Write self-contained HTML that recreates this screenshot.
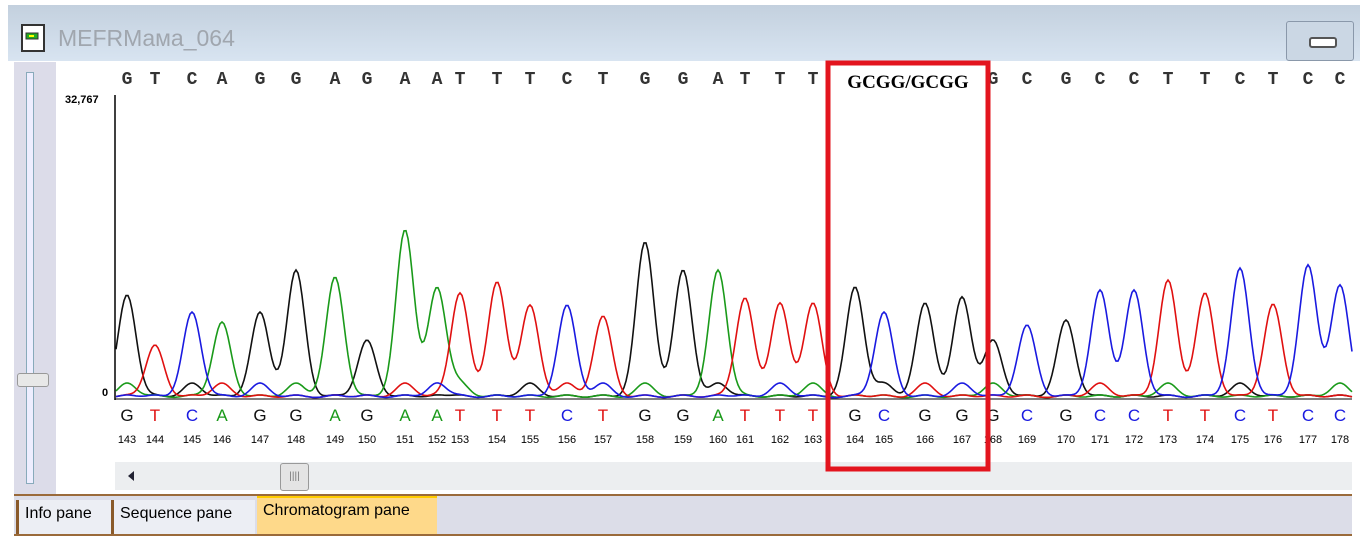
<!DOCTYPE html>
<html><head><meta charset="utf-8"><style>
body{margin:0;width:1360px;height:543px;background:#fff;position:relative;overflow:hidden;font-family:"Liberation Sans",sans-serif}
.title{position:absolute;left:8px;top:5px;width:1352px;height:56px;background:linear-gradient(#c3d0de,#d8e4f1);}
.ttext{position:absolute;left:50px;top:20px;font-size:23px;color:#a0a6ae}
.left{position:absolute;left:14px;top:62px;width:42px;height:432px;background:#dcdce9}
.main{position:absolute;left:56px;top:62px;width:1296px;height:432px;background:#fff}
.tabs{position:absolute;left:14px;top:494px;width:1338px;height:42px;background:#dcdde8;border-top:2px solid #9a6a3a;border-bottom:2px solid #9a6a3a;box-sizing:border-box}
.tab{position:absolute;top:4px;height:34px;font-size:16px;padding:5px 6px;box-sizing:border-box;background:#eceef4;border-left:3px solid #8a5a2a}
</style></head><body>
<div class="title">
 <svg style="position:absolute;left:12px;top:18px" width="28" height="30"><rect x="2" y="2" width="22" height="26" fill="#fff" stroke="#333" stroke-width="2"/><rect x="6" y="10" width="12" height="6" fill="#2a2" stroke="#333"/><rect x="9" y="12" width="5" height="2" fill="#ff0"/></svg>
 <div class="ttext">MEFRMама_064</div>
 <div style="position:absolute;left:1278px;top:16px;width:66px;height:38px;border:1px solid #8a98aa;border-radius:3px;background:#cbd7e4"><div style="position:absolute;left:22px;top:15px;width:24px;height:7px;border:2px solid #555;border-radius:3px;background:#fff"></div></div>
</div>
<div class="left"><div style="position:absolute;left:12px;top:10px;width:6px;height:410px;border:1px solid #8ab;background:#eef"></div>
<div style="position:absolute;left:3px;top:311px;width:30px;height:12px;border:1px solid #999;border-radius:3px;background:#e8e8e8"></div></div>
<div class="main"></div>
<svg id="ch" style="position:absolute;left:0;top:0" width="1360" height="543"></svg>
<div style="position:absolute;left:115px;top:462px;width:1237px;height:28px;background:#eceef0"></div>
<div style="position:absolute;left:128px;top:471px;width:0;height:0;border:5px solid transparent;border-right:6px solid #223;border-left:0"></div>
<div style="position:absolute;left:280px;top:463px;width:27px;height:26px;border:1px solid #999;border-radius:3px;background:#e4e4e4;font-size:10px;text-align:center;line-height:26px;color:#777">||||</div>
<div class="tabs">
 <div class="tab" style="left:2px;width:95px">Info pane</div>
 <div class="tab" style="left:97px;width:144px">Sequence pane</div>
 <div class="tab" style="left:243px;width:180px;top:0;height:38px;background:#fed98a;border:none;border-top:2px solid #fc0;padding-top:4px">Chromatogram pane</div>
</div>
<svg style="position:absolute;left:0;top:0" width="1360" height="543"><rect x="828" y="63" width="160" height="406" fill="none" stroke="#e3141e" stroke-width="5"/></svg>
<script>
var xs=[127,155,192,222,260,296,335,367,405,437,460,497,530,567,603,645,683,718,745,780,813,855,884,925,962,993,1027,1066,1100,1134,1168,1205,1240,1273,1308,1340];
var bs="GTCAGGAGAATTTCTGGATTTGCGGGCGCCTTCTCC";
var ys=[295,345,312,322,312,270,277,340,230,288,293,282,305,305,316,242,270,270,298,303,303,287,312,303,297,340,325,320,290,290,280,293,268,304,265,285];
var col={G:"#111",A:"#1a9a1a",T:"#e01010",C:"#1a1ae0"};
var base=398,s='';
s+='<line x1="115" y1="95" x2="115" y2="400" stroke="#000" stroke-width="1.5"/><line x1="115" y1="399" x2="1352" y2="399" stroke="#000"/>';
s+='<text x="65" y="103" font-size="11" font-weight="bold" font-family="Liberation Sans">32,767</text><text x="102" y="396" font-size="11" font-weight="bold" font-family="Liberation Sans">0</text>';
for(var b of "GATC"){var d='';for(var x=116;x<=1352;x+=2){var v=0;for(var i=0;i<xs.length;i++){var h=(bs[i]==b)?(base-ys[i]):((i*7+b.charCodeAt(0))%5==0?15:3);v+=h*Math.exp(-Math.pow((x-xs[i])/9,2)/2);}d+=(d?'L':'M')+x+' '+(base-v).toFixed(1);}
s+='<path d="'+d+'" fill="none" stroke="'+col[b]+'" stroke-width="1.6"/>';}
for(var i=0;i<xs.length;i++){s+='<text x="'+xs[i]+'" y="421" text-anchor="middle" font-size="17" font-family="Liberation Sans" fill="'+col[bs[i]]+'">'+bs[i]+'</text>';
s+='<text x="'+xs[i]+'" y="443" text-anchor="middle" font-size="11" font-family="Liberation Sans">'+(143+i)+'</text>';
if(i<21||i>24)s+='<text x="'+xs[i]+'" y="84" text-anchor="middle" font-size="18" font-weight="bold" font-family="Liberation Mono" fill="#333">'+bs[i]+'</text>';}
s+='<text x="908" y="88" text-anchor="middle" font-size="19" font-weight="bold" font-family="Liberation Serif">GCGG/GCGG</text>';
document.getElementById('ch').innerHTML=s;
</script>
</body></html>
